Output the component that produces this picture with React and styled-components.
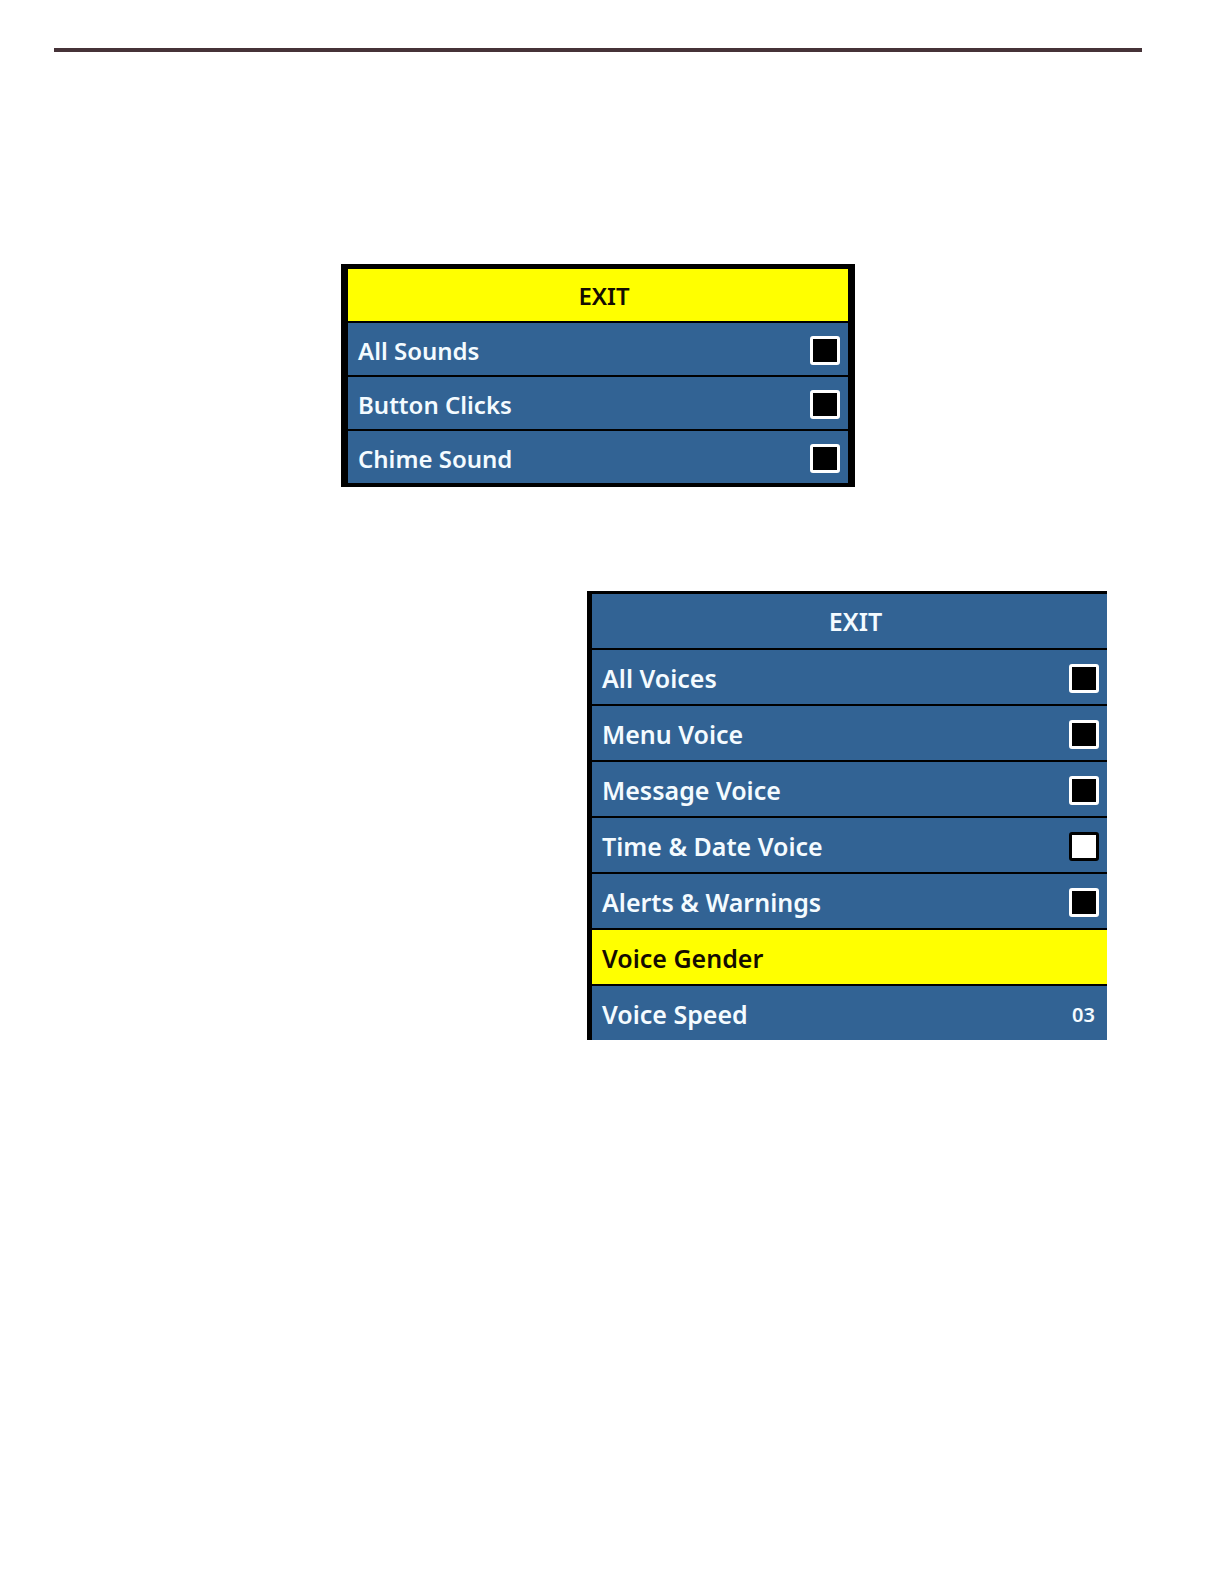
import React, { useState } from "react";
import styled, { createGlobalStyle } from "styled-components";

const GlobalStyle = createGlobalStyle`
  *, *::before, *::after { box-sizing: border-box; }
  body {
    margin: 0;
    background: #ffffff;
    font-family: "Noto Sans", "Open Sans", sans-serif;
  }
`;

const Page = styled.main`
  display: flex;
  flex-direction: column;
  padding: 48px 82px 48px 54px;
`;

const Rule = styled.hr`
  width: 100%;
  height: 4px;
  margin: 0 0 212px;
  border: 0;
  background: #463338;
`;

const Menu = styled.section`
  display: flex;
  flex-direction: column;
  gap: 2px;
  width: 100%;
  background: #000000;
`;

const SoundMenu = styled(Menu)`
  align-self: center;
  max-width: 514px;
  padding: 5px 7px 4px;
`;

const VoiceMenu = styled(Menu)`
  align-self: flex-end;
  max-width: 520px;
  margin: 104px 35px 0 0;
  padding: 3px 0 0 5px;
`;

const Row = styled.div`
  display: flex;
  align-items: center;
  justify-content: space-between;
  width: 100%;
  height: ${(p) => (p.$tall ? 54 : 52)}px;
  padding: 3px 8px 0 10px;
  border: 0;
  background: ${(p) => (p.$selected ? "#ffff00" : "#326394")};
  color: ${(p) => (p.$selected ? "#140c00" : "#f4fbff")};
  font-family: inherit;
  font-size: ${(p) => (p.$tall ? 25 : 24)}px;
  font-weight: 600;
  line-height: 35px;
  text-align: left;
`;

const ExitRow = styled(Row)`
  justify-content: center;
  padding: 1px 0 0 12px;
`;

const Label = styled.label`
  flex: 1;
`;

const Tick = styled.input`
  appearance: none;
  flex: none;
  width: 30px;
  height: 29px;
  margin: 0;
  border: 3px solid #ffffff;
  border-radius: 3px;
  background: #000000;

  &:checked {
    border-color: #000000;
    background: #ffffff;
  }
`;

const Value = styled.input`
  flex: none;
  width: 48px;
  margin: 0;
  padding: 0 4px 0 0;
  border: 0;
  background: transparent;
  color: inherit;
  font-family: inherit;
  font-size: 20px;
  font-weight: 600;
  line-height: 29px;
  text-align: right;
`;

function Toggle({ id, label, tall, initial = false }) {
  const [on, setOn] = useState(initial);
  return (
    <Row $tall={tall}>
      <Label htmlFor={id}>{label}</Label>
      <Tick id={id} type="checkbox" checked={on} onChange={(e) => setOn(e.target.checked)} />
    </Row>
  );
}

const sounds = [
  { id: "all-sounds", label: "All Sounds" },
  { id: "button-clicks", label: "Button Clicks" },
  { id: "chime-sound", label: "Chime Sound" },
];

const voices = [
  { id: "all-voices", label: "All Voices" },
  { id: "menu-voice", label: "Menu Voice" },
  { id: "message-voice", label: "Message Voice" },
  { id: "time-date-voice", label: "Time & Date Voice", initial: true },
  { id: "alerts-warnings", label: "Alerts & Warnings" },
];

export default function App() {
  const [speed, setSpeed] = useState("03");
  return (
    <>
      <GlobalStyle />
      <Page>
        <Rule />
        <SoundMenu>
          <ExitRow as="button" type="button" $selected>EXIT</ExitRow>
          {sounds.map((s) => <Toggle key={s.id} {...s} />)}
        </SoundMenu>
        <VoiceMenu>
          <ExitRow as="button" type="button" $tall>EXIT</ExitRow>
          {voices.map((v) => <Toggle key={v.id} tall {...v} />)}
          <Row as="button" type="button" $tall $selected>Voice Gender</Row>
          <Row $tall>
            <Label htmlFor="voice-speed">Voice Speed</Label>
            <Value
              id="voice-speed"
              type="text"
              inputMode="numeric"
              value={speed}
              onChange={(e) => setSpeed(e.target.value)}
            />
          </Row>
        </VoiceMenu>
      </Page>
    </>
  );
}
